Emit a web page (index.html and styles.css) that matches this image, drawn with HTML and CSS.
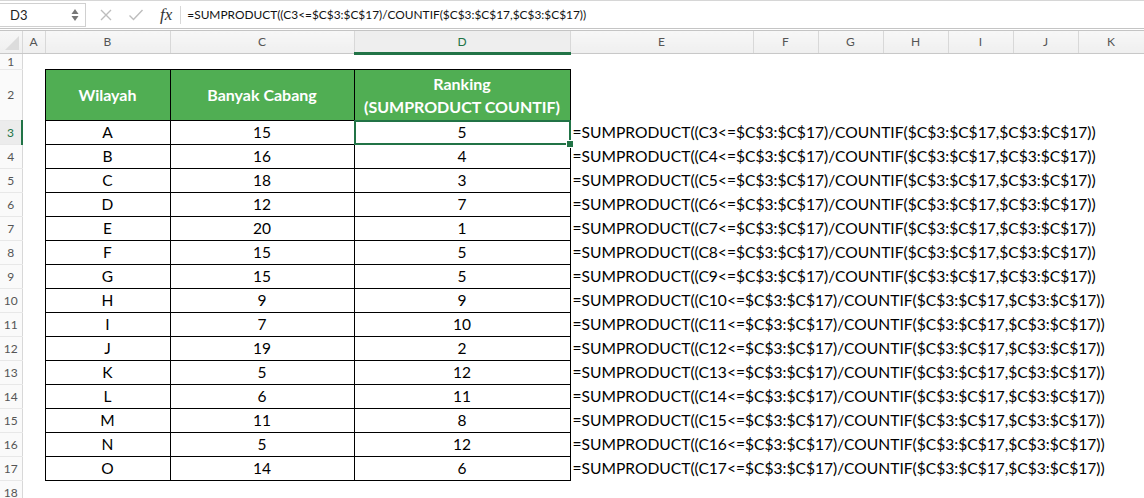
FILE: index.html
```html
<!DOCTYPE html>
<html lang="en">
<head>
    <meta charset="UTF-8">
    <title>Ranking SUMPRODUCT COUNTIF</title>
    <link rel="stylesheet" href="styles.css">
</head>
<body>
    <div class="formula-bar">
        <div class="name-box">
            <span>D3</span>
            <svg class="stepper" width="8" height="16" viewBox="0 0 8 16">
                <path d="M4 2 L7.5 7 L0.5 7 Z" fill="#777"/>
                <path d="M4 14 L7.5 9 L0.5 9 Z" fill="#777"/>
            </svg>
        </div>
        <div class="bar-icons">
            <svg width="14" height="14" viewBox="0 0 14 14">
                <path d="M2 2 L12 12 M12 2 L2 12" stroke="#bdbdbd" stroke-width="1.4" fill="none"/>
            </svg>
            <svg width="16" height="14" viewBox="0 0 16 14">
                <path d="M1.5 7.5 L5.5 11.5 L14.5 2" stroke="#bdbdbd" stroke-width="1.4" fill="none"/>
            </svg>
            <span class="fx">fx</span>
        </div>
        <div class="formula">=SUMPRODUCT((C3&lt;=$C$3:$C$17)/COUNTIF($C$3:$C$17,$C$3:$C$17))</div>
    </div>

    <table class="sheet">
        <colgroup>
            <col style="width:22px">
            <col style="width:23px">
            <col style="width:125px">
            <col style="width:184px">
            <col style="width:216px">
            <col style="width:183px">
            <col style="width:65px">
            <col style="width:65px">
            <col style="width:65px">
            <col style="width:65px">
            <col style="width:65px">
            <col style="width:66px">
        </colgroup>
        <thead>
            <tr>
                <th class="corner"><span></span></th>
                <th>A</th><th>B</th><th>C</th><th class="active">D</th><th>E</th>
                <th>F</th><th>G</th><th>H</th><th>I</th><th>J</th><th>K</th>
            </tr>
        </thead>
        <tbody>
            <tr class="row-1"><th>1</th><td colspan="11"></td></tr>
            <tr class="row-2">
                <th>2</th><td></td>
                <td class="head">Wilayah</td>
                <td class="head">Banyak Cabang</td>
                <td class="head">Ranking<br>(SUMPRODUCT COUNTIF)</td>
                <td colspan="7"></td>
            </tr>
            <tr><th class="active">3</th><td></td><td class="cell">A</td><td class="cell">15</td><td class="cell selected">5</td><td colspan="7" class="text">=SUMPRODUCT((C3&lt;=$C$3:$C$17)/COUNTIF($C$3:$C$17,$C$3:$C$17))</td></tr>
            <tr><th>4</th><td></td><td class="cell">B</td><td class="cell">16</td><td class="cell">4</td><td colspan="7" class="text">=SUMPRODUCT((C4&lt;=$C$3:$C$17)/COUNTIF($C$3:$C$17,$C$3:$C$17))</td></tr>
            <tr><th>5</th><td></td><td class="cell">C</td><td class="cell">18</td><td class="cell">3</td><td colspan="7" class="text">=SUMPRODUCT((C5&lt;=$C$3:$C$17)/COUNTIF($C$3:$C$17,$C$3:$C$17))</td></tr>
            <tr><th>6</th><td></td><td class="cell">D</td><td class="cell">12</td><td class="cell">7</td><td colspan="7" class="text">=SUMPRODUCT((C6&lt;=$C$3:$C$17)/COUNTIF($C$3:$C$17,$C$3:$C$17))</td></tr>
            <tr><th>7</th><td></td><td class="cell">E</td><td class="cell">20</td><td class="cell">1</td><td colspan="7" class="text">=SUMPRODUCT((C7&lt;=$C$3:$C$17)/COUNTIF($C$3:$C$17,$C$3:$C$17))</td></tr>
            <tr><th>8</th><td></td><td class="cell">F</td><td class="cell">15</td><td class="cell">5</td><td colspan="7" class="text">=SUMPRODUCT((C8&lt;=$C$3:$C$17)/COUNTIF($C$3:$C$17,$C$3:$C$17))</td></tr>
            <tr><th>9</th><td></td><td class="cell">G</td><td class="cell">15</td><td class="cell">5</td><td colspan="7" class="text">=SUMPRODUCT((C9&lt;=$C$3:$C$17)/COUNTIF($C$3:$C$17,$C$3:$C$17))</td></tr>
            <tr><th>10</th><td></td><td class="cell">H</td><td class="cell">9</td><td class="cell">9</td><td colspan="7" class="text">=SUMPRODUCT((C10&lt;=$C$3:$C$17)/COUNTIF($C$3:$C$17,$C$3:$C$17))</td></tr>
            <tr><th>11</th><td></td><td class="cell">I</td><td class="cell">7</td><td class="cell">10</td><td colspan="7" class="text">=SUMPRODUCT((C11&lt;=$C$3:$C$17)/COUNTIF($C$3:$C$17,$C$3:$C$17))</td></tr>
            <tr><th>12</th><td></td><td class="cell">J</td><td class="cell">19</td><td class="cell">2</td><td colspan="7" class="text">=SUMPRODUCT((C12&lt;=$C$3:$C$17)/COUNTIF($C$3:$C$17,$C$3:$C$17))</td></tr>
            <tr><th>13</th><td></td><td class="cell">K</td><td class="cell">5</td><td class="cell">12</td><td colspan="7" class="text">=SUMPRODUCT((C13&lt;=$C$3:$C$17)/COUNTIF($C$3:$C$17,$C$3:$C$17))</td></tr>
            <tr><th>14</th><td></td><td class="cell">L</td><td class="cell">6</td><td class="cell">11</td><td colspan="7" class="text">=SUMPRODUCT((C14&lt;=$C$3:$C$17)/COUNTIF($C$3:$C$17,$C$3:$C$17))</td></tr>
            <tr><th>15</th><td></td><td class="cell">M</td><td class="cell">11</td><td class="cell">8</td><td colspan="7" class="text">=SUMPRODUCT((C15&lt;=$C$3:$C$17)/COUNTIF($C$3:$C$17,$C$3:$C$17))</td></tr>
            <tr><th>16</th><td></td><td class="cell">N</td><td class="cell">5</td><td class="cell">12</td><td colspan="7" class="text">=SUMPRODUCT((C16&lt;=$C$3:$C$17)/COUNTIF($C$3:$C$17,$C$3:$C$17))</td></tr>
            <tr><th>17</th><td></td><td class="cell">O</td><td class="cell">14</td><td class="cell">6</td><td colspan="7" class="text">=SUMPRODUCT((C17&lt;=$C$3:$C$17)/COUNTIF($C$3:$C$17,$C$3:$C$17))</td></tr>
            <tr><th>18</th><td colspan="11"></td></tr>
        </tbody>
    </table>
</body>
</html>
```

FILE: styles.css
```css
* {
    box-sizing: border-box;
    margin: 0;
    padding: 0;
}

body {
    font-family: Lato, 'Liberation Sans', sans-serif;
    background: #ffffff;
    color: #000;
    overflow: hidden;
}

/* Formula bar */
.formula-bar {
    height: 31px;
    display: flex;
    align-items: center;
    border-top: 1px solid #d6d6d6;
    border-bottom: 3px double #c4c4c4;
    background: #fff;
}

.name-box {
    width: 86px;
    height: 24px;
    border: 1px solid #d0d0d0;
    border-left: none;
    display: flex;
    align-items: center;
    justify-content: space-between;
    padding: 0 6px 0 10px;
    font-size: 13px;
    color: #222;
}

.bar-icons {
    display: flex;
    align-items: center;
    gap: 15px;
    padding-left: 13px;
    height: 18px;
    padding-right: 8px;
    border-right: 1px solid #d8d8d8;
}

.fx {
    font-family: 'Liberation Serif', serif;
    font-style: italic;
    font-size: 17px;
    color: #333;
    margin-left: 1px;
    line-height: 1;
}

.formula {
    padding-left: 6px;
    font-size: 11.9px;
    color: #111;
    white-space: nowrap;
}

/* Sheet */
.sheet {
    border-collapse: collapse;
    table-layout: fixed;
    width: 1144px;
}

.sheet thead th {
    height: 22px;
    font-size: 12px;
    font-weight: 400;
    color: #555;
    background: linear-gradient(#f7f7f7, #efefef);
    border-right: 1px solid #d8d8d8;
    border-bottom: 1px solid #c8c8c8;
}

.sheet thead th.active {
    color: #217346;
    background: #eeeeee;
    border-bottom: 3px solid #217346;
}

.sheet thead th.corner {
    position: relative;
}

.corner span {
    position: absolute;
    right: 3px;
    bottom: 3px;
    width: 0;
    height: 0;
    border-left: 14px solid transparent;
    border-bottom: 14px solid #dcdcdc;
}

.sheet tbody th {
    font-size: 12px;
    font-weight: 400;
    color: #555;
    background: #fafafa;
    border-right: 1px solid #d8d8d8;
    border-bottom: 1px solid #e8e8e8;
    text-align: center;
}

.sheet tbody th.active {
    color: #217346;
    border-right: 2px solid #217346;
    background: #ececec;
}

.sheet tbody tr {
    height: 24px;
}

.sheet tbody tr.row-1 {
    height: 16px;
}

.sheet tbody tr.row-2 {
    height: 51px;
}

.head {
    background: #50ae53;
    color: #fff;
    font-weight: 700;
    font-size: 16px;
    line-height: 23px;
    text-align: center;
    border: 1px solid #000;
}

.cell {
    font-size: 15.5px;
    text-align: center;
    border: 1px solid #000;
}

.text {
    font-size: 15.6px;
    white-space: nowrap;
    padding-left: 2px;
}

.selected {
    position: relative;
}

.selected::after {
    content: '';
    position: absolute;
    left: -1px;
    top: -1px;
    right: -1px;
    bottom: -1px;
    border: 2px solid #217346;
}

.selected::before {
    content: '';
    position: absolute;
    right: -4px;
    bottom: -4px;
    width: 6px;
    height: 6px;
    background: #217346;
    border: 1px solid #fff;
    z-index: 1;
}
```
